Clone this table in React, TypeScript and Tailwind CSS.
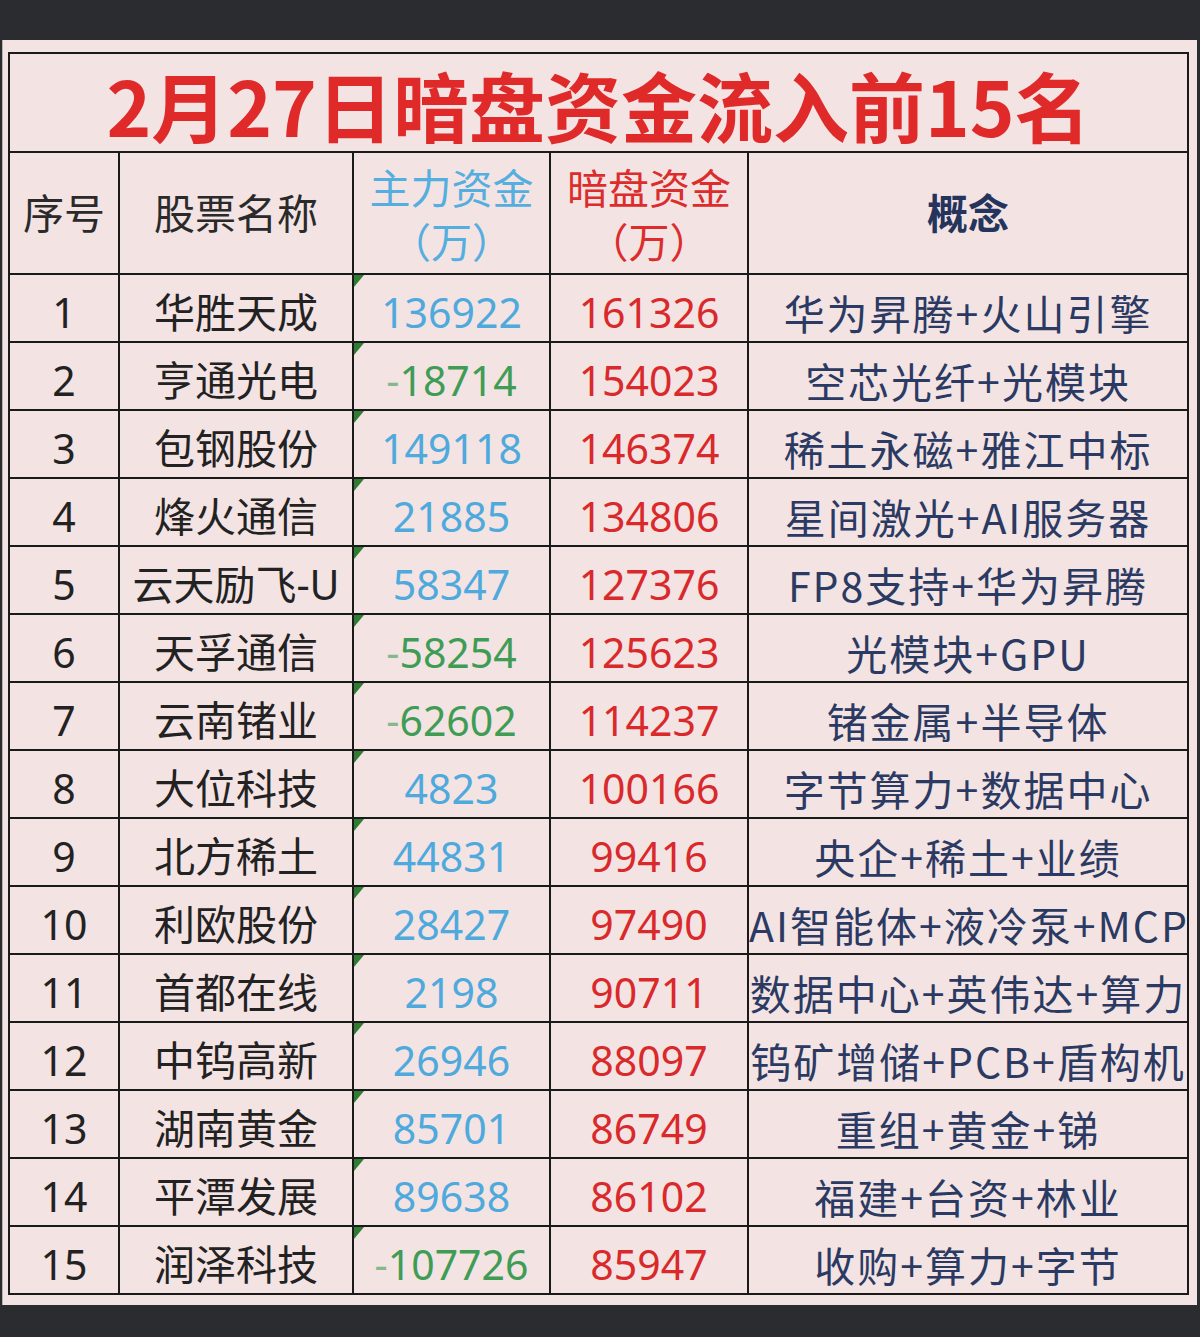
import React from 'react';

interface Row {
  name: string;
  main: number;
  dark: number;
  concept: string;
}

const rows: Row[] = [
  { name: '华胜天成', main: 136922, dark: 161326, concept: '华为昇腾+火山引擎' },
  { name: '亨通光电', main: -18714, dark: 154023, concept: '空芯光纤+光模块' },
  { name: '包钢股份', main: 149118, dark: 146374, concept: '稀土永磁+雅江中标' },
  { name: '烽火通信', main: 21885, dark: 134806, concept: '星间激光+AI服务器' },
  { name: '云天励飞-U', main: 58347, dark: 127376, concept: 'FP8支持+华为昇腾' },
  { name: '天孚通信', main: -58254, dark: 125623, concept: '光模块+GPU' },
  { name: '云南锗业', main: -62602, dark: 114237, concept: '锗金属+半导体' },
  { name: '大位科技', main: 4823, dark: 100166, concept: '字节算力+数据中心' },
  { name: '北方稀土', main: 44831, dark: 99416, concept: '央企+稀土+业绩' },
  { name: '利欧股份', main: 28427, dark: 97490, concept: 'AI智能体+液冷泵+MCP' },
  { name: '首都在线', main: 2198, dark: 90711, concept: '数据中心+英伟达+算力' },
  { name: '中钨高新', main: 26946, dark: 88097, concept: '钨矿增储+PCB+盾构机' },
  { name: '湖南黄金', main: 85701, dark: 86749, concept: '重组+黄金+锑' },
  { name: '平潭发展', main: 89638, dark: 86102, concept: '福建+台资+林业' },
  { name: '润泽科技', main: -107726, dark: 85947, concept: '收购+算力+字节' },
];

// little green "number stored as text" marker in the cell corner
function Flag() {
  return (
    <svg className="absolute left-0 top-0" width="10" height="12" viewBox="0 0 10 12">
      <polygon points="0,0 10,0 0,12" fill="#2f7d32" />
    </svg>
  );
}

export default function App() {
  return (
    <div
      className="w-[1200px] h-[1337px] bg-[#2a2c30] pt-[40px] pl-[2px] pr-[3px]"
      style={{ fontFamily: '"Noto Sans", "Noto Sans CJK SC", sans-serif' }}
    >
      <div className="h-[1265px] bg-[#f3e3e3] border-l border-[#b8b0b0] pt-[12px] pl-[5px] pr-[10px]">
        <table className="border-collapse table-fixed w-[1179px] border-2 border-[#1a1a1a]">
          <colgroup>
            <col className="w-[110px]" />
            <col className="w-[234px]" />
            <col className="w-[197px]" />
            <col className="w-[198px]" />
            <col className="w-[440px]" />
          </colgroup>
          <thead>
            <tr className="h-[99px]">
              <th
                colSpan={5}
                className="border-2 border-[#1a1a1a] pt-[2px] text-center text-[76px] font-bold text-[#e02a2a] leading-none"
                style={{ fontFamily: '"Noto Sans CJK SC", sans-serif' }}
              >
                2月27日暗盘资金流入前15名
              </th>
            </tr>
            <tr className="h-[122px] text-[41px] font-normal leading-[54px]">
              <th className="border-2 border-[#1a1a1a] font-normal text-[#2a2a2a]">序号</th>
              <th className="border-2 border-[#1a1a1a] font-normal text-[#2a2a2a]">股票名称</th>
              <th className="border-2 border-[#1a1a1a] pt-[4px] font-normal text-[#55aee0]">
                <div>主力资金</div>
                <div>（万）</div>
              </th>
              <th className="border-2 border-[#1a1a1a] pt-[4px] font-normal text-[#dc2d2d]">
                <div>暗盘资金</div>
                <div>（万）</div>
              </th>
              <th className="border-2 border-[#1a1a1a] font-bold text-[#25345c]">概念</th>
            </tr>
          </thead>
          <tbody>
            {rows.map((row, i) => (
              <tr key={i} className="h-[68px] text-[41px] leading-none">
                <td className="border-2 border-[#1a1a1a] pt-[8px] text-center text-[#222]">{i + 1}</td>
                <td className="border-2 border-[#1a1a1a] pt-[8px] text-center text-[#222] whitespace-nowrap">
                  {row.name}
                </td>
                <td
                  className={
                    'relative border-2 border-[#1a1a1a] pt-[8px] text-center whitespace-nowrap ' +
                    (row.main < 0 ? 'text-[#3f9c55]' : 'text-[#4ea9dd]')
                  }
                >
                  <Flag />
                  {row.main < 0 ? (
                    <>
                      <span className="opacity-60">-</span>
                      {Math.abs(row.main)}
                    </>
                  ) : (
                    row.main
                  )}
                </td>
                <td className="border-2 border-[#1a1a1a] pt-[8px] text-center text-[#d9292b]">{row.dark}</td>
                <td
                  className="border-2 border-[#1a1a1a] pt-[8px] text-center text-[#2b3a62] whitespace-nowrap tracking-[2px]"
                  style={{ fontFamily: '"Noto Sans CJK SC", sans-serif' }}
                >
                  {row.concept}
                </td>
              </tr>
            ))}
          </tbody>
        </table>
      </div>
    </div>
  );
}
